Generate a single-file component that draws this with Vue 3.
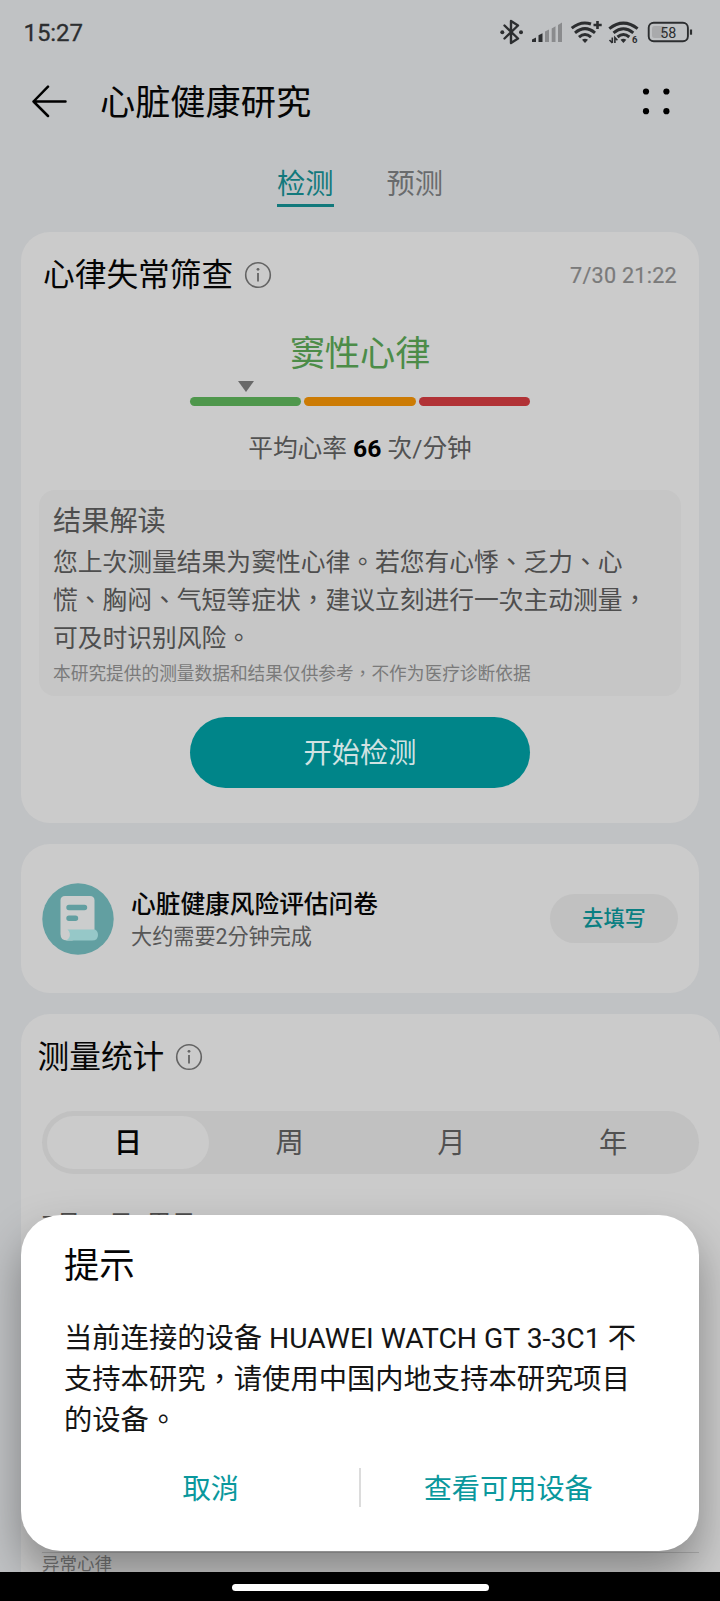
<script setup>
const periods = ['日', '周', '月', '年']
const levels = ['normal', 'warning', 'danger']
const advice = [
  '您上次测量结果为窦性心律。若您有心悸、乏力、心',
  '慌、胸闷、气短等症状，建议立刻进行一次主动测量，',
  '可及时识别风险。',
]
const message = [
  '当前连接的设备 HUAWEI WATCH GT 3-3C1 不',
  '支持本研究，请使用中国内地支持本研究项目',
  '的设备。',
]
</script>

<template>
  <div class="screen" lang="zh-Hant">
    <div class="status">
      <span class="clock">15:27</span>
      <svg class="status-icons" width="200" height="34" viewBox="495 15 200 34" fill="none" stroke="#2c2e30">
        <path d="M504.500 25.500L518 38.500L511 43V21L518 25.500L504.500 38.500" stroke-width="2.400" stroke-linejoin="round" stroke-linecap="round" />
        <circle cx="502.300" cy="32.300" r="2" fill="#2c2e30" stroke="none" />
        <circle cx="521" cy="32.300" r="2" fill="#2c2e30" stroke="none" />
        <g stroke="none" fill="#2c2e30">
          <path d="M532 39.500L536 37.500V42H532Z" />
          <path d="M538.500 35.300L542.500 33.300V42H538.500Z" />
          <g fill="#8a8b8d">
            <path d="M545 31.500L549 29.500V42H545Z" />
            <path d="M551.700 28.500L555.500 26.300V42H551.700Z" />
            <path d="M558 25L562 22.500V42H558Z" />
          </g>
        </g>
        <g stroke-width="3">
          <path d="M571.700 28.200Q581 20.500 591 24" />
          <path d="M575 32.800Q585 24.400 595 32.800" />
          <path d="M579 37.200Q585 31.800 591 37.200" />
          <path d="M597.500 21V29M593.500 25H601.700" stroke-width="2.600" />
          <path d="M609.300 28.600Q623.400 17.600 637.600 28.600" />
          <path d="M613.500 32.900Q623.400 24.700 633.300 32.900" />
          <path d="M617.500 37Q623.400 32 629.300 37" />
        </g>
        <path d="M582 39.800Q585 37.600 588 39.800L585 43Z" fill="#2c2e30" stroke="none" />
        <path d="M620.500 39.800Q623.400 37.600 626.300 39.800L623.400 43Z" fill="#2c2e30" stroke="none" />
        <path d="M612.300 37.500V43M612.300 43L609.500 40M614.900 43V37.500L617.400 40.200" stroke-width="1.600" />
        <text x="632" y="43.300" font-size="9.500" font-weight="700" fill="#2c2e30" stroke="none">6</text>
        <rect x="652" y="26" width="13" height="12" rx="2.500" fill="#a9aaac" stroke="none" />
        <rect x="648.700" y="22.800" width="39.200" height="18.400" rx="5" stroke-width="1.900" />
        <path d="M691 29.500V34.700" stroke-width="2.200" />
        <text x="668.200" y="38" font-size="14.300" font-weight="400" text-anchor="middle" fill="#2c2e30" stroke="none">58</text>
      </svg>
    </div>

    <header class="header">
      <svg width="36" height="34" viewBox="0 0 36 34" fill="none" stroke="#000" stroke-width="2.500" stroke-linecap="round" stroke-linejoin="round">
        <path d="M34.500 16.500H2.500M17 1.700L2.500 16.500L17 31" />
      </svg>
      <h1>心脏健康研究</h1>
      <svg class="more" width="28" height="28" viewBox="0 0 28 28">
        <circle cx="4" cy="3.500" r="3.100" /><circle cx="24.400" cy="3.500" r="3.100" />
        <circle cx="4" cy="23.200" r="3.100" /><circle cx="24.400" cy="23.200" r="3.100" />
      </svg>
    </header>

    <nav class="tabs">
      <span class="tab active">检测</span>
      <span class="tab">预测</span>
    </nav>

    <section class="card screening">
      <div class="card-head">
        <h2>心律失常筛查</h2>
        <svg class="info" width="28" height="28" viewBox="0 0 28 28" fill="none" stroke="#646464">
          <circle cx="14" cy="14" r="12.300" stroke-width="1.600" />
          <path d="M14 12V20.500" stroke-width="1.800" /><circle cx="14" cy="8.300" r="1.400" fill="#646464" stroke="none" />
        </svg>
        <time>7/30 21:22</time>
      </div>
      <div class="result">窦性心律</div>
      <div class="gauge">
        <svg class="pointer" width="16" height="11" viewBox="0 0 16 11"><path d="M0 0H16L8 11Z" fill="#696969" /></svg>
        <div class="levels"><i v-for="l in levels" :key="l" :class="l"></i></div>
      </div>
      <div class="average">平均心率 <b>66</b> 次/分钟</div>
      <div class="reading">
        <h3>结果解读</h3>
        <p><span v-for="line in advice" :key="line">{{ line }}</span></p>
        <small>本研究提供的测量数据和结果仅供参考，不作为医疗诊断依据</small>
      </div>
      <button class="start">开始检测</button>
    </section>

    <section class="card survey">
      <svg width="72" height="72" viewBox="0 0 72 72">
        <circle cx="36" cy="36" r="35.700" fill="#629fa1" />
        <path d="M18.500 51V17.500Q18.500 13 23 13H48Q52.500 13 52.500 17.500V50L30 57.500H25Q18.500 57.500 18.500 51Z" fill="#cbcdcd" />
        <path d="M25.500 46.500H53Q56 48 56 52Q56 57.500 50 57.500H24Q28.500 55 27.800 50.500Q27.300 48 25.500 46.500Z" fill="#96c8c8" />
        <path d="M27 24.500H42.500M27 35.300H33.500" stroke="#629fa1" stroke-width="5.400" stroke-linecap="round" />
      </svg>
      <div class="survey-text">
        <strong>心脏健康风险评估问卷</strong>
        <span>大约需要2分钟完成</span>
      </div>
      <button>去填写</button>
    </section>

    <section class="card stats">
      <div class="card-head">
        <h2>测量统计</h2>
        <svg class="info" width="28" height="28" viewBox="0 0 28 28" fill="none" stroke="#646464">
          <circle cx="14" cy="14" r="12.300" stroke-width="1.600" />
          <path d="M14 12V20.500" stroke-width="1.800" /><circle cx="14" cy="8.300" r="1.400" fill="#646464" stroke="none" />
        </svg>
      </div>
      <div class="segment">
        <span v-for="(p, i) in periods" :key="p" :class="{ selected: i === 0 }">{{ p }}</span>
      </div>
      <div class="day">7月30日 周日</div>
      <div class="legend">异常心律</div>
    </section>

    <div class="dialog" role="dialog">
      <h2>提示</h2>
      <p><span v-for="line in message" :key="line">{{ line }}</span></p>
      <div class="actions">
        <button>取消</button>
        <i></i>
        <button>查看可用设备</button>
      </div>
    </div>

    <div class="navbar"><i></i></div>
  </div>
</template>

<style>
body { margin: 0; background: #c0c2c4; }
</style>

<style scoped>
.screen {
  position: relative;
  width: 720px;
  height: 1601px;
  overflow: hidden;
  background: #c0c2c4;
  color: #050505;
  font-family: Roboto, "Noto Sans CJK TC", "Noto Sans CJK SC", sans-serif;
}
h1, h2, h3, p { margin: 0; font-weight: 400; }
p span { display: block; white-space: nowrap; }
svg { flex: none; display: block; }
button { border: 0; padding: 0; font-family: inherit; background: none; display: block; }
.status { display: flex; justify-content: space-between; height: 68px; padding: 0 25px 0 23.500px; }
.clock { font-size: 24px; line-height: 67px; color: #2c2e30; letter-spacing: -0.100px; -webkit-text-stroke: 0.300px #2c2e30; }
.status-icons { margin-top: 15px; }
.header { display: flex; align-items: center; height: 68px; padding: 0 50px 0 31px; }
.header h1 { margin-left: 33px; font-size: 35.200px; line-height: 68px; padding-top: 2px; }
.more { margin-left: auto; }
.tabs { display: flex; justify-content: center; gap: 53px; height: 96px; box-sizing: border-box; padding-top: 25px; }
.tab { height: 43px; font-size: 28.300px; line-height: 47px; color: #696b6d; border-bottom: 3px solid transparent; }
.tab.active { color: #12797c; border-color: #12797c; }

.card { margin: 0 21px 21px; box-sizing: border-box; border-radius: 29px; background: #cbcbcb; }
.card-head { display: flex; align-items: center; height: 86px; }
.card-head h2 { font-size: 31.700px; line-height: 86px; padding-top: 2px; }
.info { margin-left: 11px; }
.card-head time { margin-left: auto; font-size: 21.600px; letter-spacing: 0.250px; color: #7a7a7a; -webkit-text-stroke: 0.200px #7a7a7a; }
.screening { height: 591px; padding: 0 18px; overflow: hidden; }
.screening .card-head { padding: 0 4px; }
.result { height: 63px; line-height: 72px; text-align: center; font-size: 35.200px; color: #4c8c48; }
.gauge { width: 340px; margin: 0 auto; }
.pointer { margin-left: 48px; }
.levels { display: flex; gap: 3px; margin-top: 5px; }
.levels i { flex: 1; height: 9px; border-radius: 5px; }
.normal { background: #4f974c; }
.warning { background: #cc7b04; }
.danger { background: #b13236; }
.average { height: 84px; line-height: 86px; text-align: center; font-size: 24.700px; color: #525252; }
.average b { color: #000; font-size: 24.700px; }
.reading { height: 206px; box-sizing: border-box; padding: 10px 14px 0; background: #c6c6c6; border-radius: 16px; color: #4e4e4e; }
.reading h3 { font-size: 28.200px; line-height: 43px; height: 44px; }
.reading p { font-size: 24.770px; line-height: 37.800px; }
.reading small { display: block; font-size: 17.700px; line-height: 34px; color: #7a7a7a; white-space: nowrap; }
.start { width: 340px; height: 71px; margin: 21px auto 0; border-radius: 36px; background: #008589; color: #d0e2e2; font-size: 28.200px; line-height: 73px; }

.survey { display: flex; align-items: center; height: 149px; padding: 0 21px; }
.survey-text { display: flex; flex-direction: column; margin-left: 17px; padding-top: 3px; }
.survey-text strong { font-size: 24.700px; font-weight: 500; line-height: 34px; }
.survey-text span { font-size: 21.150px; line-height: 30px; color: #575757; }
.survey button { margin-left: auto; width: 128px; height: 49px; border-radius: 25px; background: #c1c1c1; color: #0a7f82; font-size: 21.200px; font-weight: 500; line-height: 50px; }

.stats { margin-right: 0; margin-bottom: 0; height: 587px; padding: 0 21px 0; border-bottom-left-radius: 0; border-bottom-right-radius: 0; }
.stats .card-head { margin-left: -4.500px; }
.stats .card-head h2 { line-height: 86px; }
.segment { display: flex; height: 63px; box-sizing: border-box; margin-top: 11px; padding: 5px; border-radius: 32px; background: #c1c1c1; font-size: 28.300px; line-height: 55px; color: #515151; }
.segment span { flex: 1; text-align: center; }
.segment .selected { background: #cbcbcb; border-radius: 27px; color: #050505; font-weight: 500; }
.day { height: 379px; box-sizing: border-box; padding-top: 31px; font-size: 24.800px; line-height: 40px; word-spacing: 7px; color: #4e4e4e; border-bottom: 1px solid #aeaeae; }
.legend { font-size: 17.500px; line-height: 22px; color: #777; }

.dialog {
  position: absolute;
  left: 21px;
  top: 1215px;
  width: 678px;
  height: 336px;
  box-sizing: border-box;
  padding: 21px 43px 0;
  border-radius: 40px;
  background: #fff;
  box-shadow: 0 22px 44px rgba(0, 0, 0, 0.34);
}
.dialog h2 { font-size: 35.300px; line-height: 60px; height: 83px; }
.dialog p { font-size: 28.300px; line-height: 40.800px; color: #151515; }
.actions { display: flex; align-items: center; margin: 26px -43px 0; height: 40px; }
.actions button { flex: 1; padding-top: 5px; color: #0a989d; font-size: 28.200px; line-height: 40px; }
.actions button:first-child { padding-left: 42px; }
.actions button:last-child { padding-right: 43px; }
.actions i { width: 2px; height: 39px; background: #dcdcdc; }

.navbar { position: absolute; left: 0; right: 0; bottom: 0; height: 29px; display: flex; justify-content: center; align-items: center; background: #000; }
.navbar i { width: 257px; height: 7px; margin-top: 1px; border-radius: 4px; background: #fff; }
</style>
